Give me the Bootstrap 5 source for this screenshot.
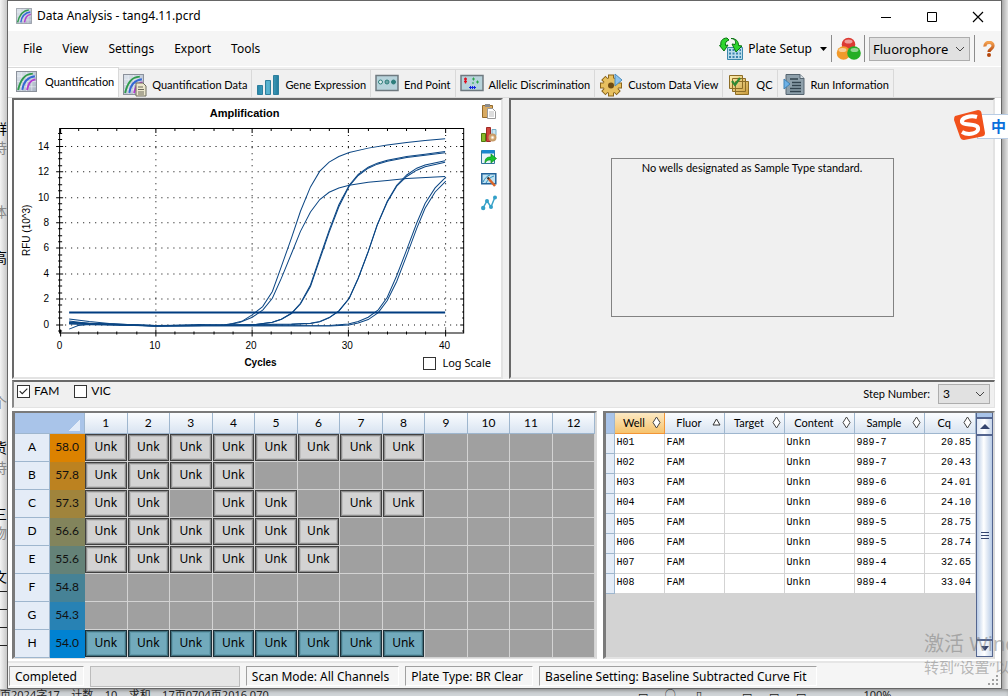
<!DOCTYPE html>
<html lang="en">
<head>
<meta charset="utf-8">
<meta name="viewport" content="width=device-width, initial-scale=1">
<title>Data Analysis - tang4.11.pcrd</title>
<link href="https://cdn.jsdelivr.net/npm/bootstrap@5.3.0/dist/css/bootstrap.min.css" rel="stylesheet">
<style>
  body { font: 12px/16px "Noto Sans", "Noto Sans CJK SC", sans-serif; color: #000; background: #ececec; overflow: hidden; }
  button, select { font: inherit; color: inherit; }
  button { border: 0; background: none; padding: 0; }
  .ui-narrow { font-family: Lato, "Liberation Sans", Arial, sans-serif; font-size: 11px; }
  .desk { grid-template-columns: 7px minmax(0, 1fr) 6px; display: grid; }
  .gutter { overflow: hidden; background: linear-gradient(90deg, #f4f4f4, #c8c8c8); }
  .gutter-r { background: linear-gradient(90deg, #a8a8a8, #e4e4e4); }
  .gutter span { position: absolute; left: -7px; width: 14px; font-size: 14px; overflow: hidden; white-space: nowrap; }
  .gutter .rule { left: 0; width: 7px; height: 1px; background: #222; }
  .app { background: #f0f0f0; border: 1px solid #666; }
  .titlebar { height: 30px; background: #fff; }
  .titlebar .name { margin-left: 5px; }
  .caption-btn { width: 46px; height: 28px; }
  .menubar { height: 35px; background: #f5f5f5; padding-left: 5px; }
  .menubar .menu { padding: 0 10px; font-size: 12px; }
  .menubar .right { padding-right: 6px; }
  .menubar .dyes { padding: 0 3px 0 4px; }
  .vsep { width: 1px; height: 27px; background: #8c8c8c; }
  .form-select { border: 1px solid #adadad; border-radius: 0; background-color: #e1e1e1; color: #000; font-size: 13px; line-height: 16px; padding: 3px 16px 3px 3px; background-size: 10px 10px; background-position: right 4px center;
    background-image: url("data:image/svg+xml,%3Csvg xmlns='http://www.w3.org/2000/svg' viewBox='0 0 10 10'%3E%3Cpath d='M1 3l4 4 4-4' fill='none' stroke='%23444'/%3E%3C/svg%3E"); }
  .by { width: 101px; }
  .tabs { border-top: 1px solid #fff; border-bottom: 1px solid #dcdcdc; height: 32px; align-items: flex-end; }
  .tabs button { height: 28px; padding: 2px 4px 0 4px; border: 1px solid #d9d9d9; border-left: 0; border-bottom: 0; display: flex; align-items: center; white-space: nowrap; }
  .tabs button svg { margin-right: 5px; flex: none; }
  .tabs button.active { height: 30px; background: #fff; padding: 0 4px 2px 8px; }
  .work { background: #fff; padding: 0 6px 0 4px; }
  .charts { display: grid; grid-template-columns: 491fr 486fr; gap: 6px; background: #f0f0f0; }
  .sunken { border: 2px solid; border-color: #696969 #e3e3e3 #e3e3e3 #696969; }
  .chart svg text { font: 10px "Liberation Sans", Arial, sans-serif; }
  .chart svg .heading { font-size: 11px; font-weight: bold; }
  .under { display: grid; grid-template-columns: 1fr auto 1fr; height: 24px; align-items: center; padding: 0 10px 3px 16px; }
  .under b { font: bold 10px/16px "Liberation Sans", sans-serif; }
  .under label { font-size: 11px; gap: 6px; }
  .tools { width: 25px; padding-top: 3px; gap: 7px; }
  .tools button { height: 16px; line-height: 0; }
  .notice { width: 283px; height: 159px; border: 1px solid #828282; margin-top: 58px; padding-top: 1px; }
  .form-check-input { width: 13px; height: 13px; border: 1px solid #333; border-radius: 0; margin: 0; background-color: #fff; }
  .form-check-input[type=checkbox] { border-radius: 0; }
  .form-check-input:checked { background-color: #fff; border-color: #333; background-image: url("data:image/svg+xml,%3Csvg xmlns='http://www.w3.org/2000/svg' viewBox='0 0 13 13'%3E%3Cpath d='M2 6l3 3 6-6' fill='none' stroke='%23222' stroke-width='1.3'/%3E%3C/svg%3E"); }
  .filters { height: 28px; border: 1px solid #e3e3e3; border-top: 2px solid #696969; border-left: 2px solid #898989; background: #f0f0f0; margin-top: 1px; }
  .filters .dye { padding-bottom: 6px; margin-left: 3px; margin-right: 12px; font-size: 12px; }
  .filters .form-select { width: 52px; font-size: 12px; padding: 1px 4px; }
  .data { display: grid; grid-template-columns: 586fr 392fr; gap: 6px; margin-top: 3px; padding-bottom: 2px; }
  .data > div { border: 2px solid; border-color: #7a7a7a #d9d9d9 #e3e3e3 #7a7a7a; border-left-width: 3px; height: 248px; }
  .plate { table-layout: fixed; width: 100%; border-collapse: separate; border-spacing: 0; text-align: center; line-height: 16px; }
  .plate th, .plate td { padding: 0; font-weight: normal; }
  .plate .ui-narrow { font-size: 12px; }
  .plate thead th { height: 21px; background: linear-gradient(#fafcff, #d9e4f1); border-right: 1px solid #9eb6ce; border-bottom: 1px solid #9eb6ce; }
  .plate thead .corner { background: linear-gradient(135deg, transparent 50%, #e2ebf8 50%) right 4px bottom 2px / 11px 11px no-repeat, #a9c4e9; }
  .plate tbody th { background: #e4ecf7; border-right: 1px solid #9eb6ce; border-bottom: 1px solid #9eb6ce; }
  .plate tbody td { height: 28px; background: #a0a0a0; border-right: 1px solid #d3d3d3; border-bottom: 1px solid #d3d3d3; }
  .plate tbody .temp { border-color: transparent; color: #111; background-clip: border-box; }
  .plate .well { height: 27px; border: 1px solid #404040; background: #d3d3d3; box-shadow: inset 0 0 0 1px #8c8c8c, inset 0 0 0 2px #bebebe; padding-top: 4px; }
  .plate .sel .well { background: #72aabc; border-color: #1c3038; box-shadow: inset 0 0 0 1px #42707e, inset 0 0 0 2px #629bac; }
  .results { background: #d3d3d3; }
  .cq { table-layout: fixed; width: 100%; border-collapse: separate; border-spacing: 0; }
  .cq th { height: 21px; font-weight: normal; padding: 0; background: linear-gradient(#fafcff, #d9e4f1); border-right: 1px solid #9eb6ce; border-bottom: 1px solid #9eb6ce; }
  .cq th .hd { display: flex; align-items: center; padding: 0 3px 0 0; }
  .cq th .hd span { flex: 1; text-align: center; }
  .cq .sorted { background: linear-gradient(#fce9c4, #f6c36d); border-color: #f29536; }
  .cq thead .edge { background: #a9c4e9; }
  .cq tbody .edge { background: #e4ecf7; border-color: #9eb6ce; }
  .cq td { height: 20px; padding: 0 0 1px 1px; background: #fff; border-right: 1px solid #d3d3d3; border-bottom: 1px solid #d3d3d3; font: 10px/14px "Liberation Mono", monospace; }
  .cq td:last-child { text-align: right; padding-right: 4px; }
  .vscroll { width: 17px; border: 1px solid #54658f; border-width: 0 1px 1px 1px; background: linear-gradient(90deg, #b8cbe6, #fff 45%, #b8cbe6); }
  .vscroll i { display: block; background: linear-gradient(90deg, #dfe8f5, #fff, #c5d4ea); border-bottom: 2px solid #54658f; height: 17px; line-height: 0; text-align: center; }
  .vscroll i.split { height: 6px; border-bottom-width: 2px; background: #a9c4e9; }
  .vscroll i.down { border: 0; border-top: 2px solid #54658f; }
  .statusbar { background: #f5f5f5; border-top: 2px solid #e6e6e6; height: 27px; padding: 3px 0 2px 1px; gap: 6px; }
  .statusbar .pane { border: 1px solid; border-color: #a0a0a0 #fff #fff #a0a0a0; padding: 2px 9px 0 5px; height: 20px; white-space: nowrap; }
  .statusbar .state { padding-right: 6px; }
  .statusbar .bar { width: 150px; height: 21px; background: #e6e6e6; border: 1px solid #bcbcbc; }
  .behind { height: 16px; line-height: 12px; font-size: 11px; white-space: pre; overflow: hidden; background: #d0d4d7; color: #222; box-shadow: inset 0 3px 4px -2px #777; }
  .ime { right: 0; top: 109px; width: 55px; height: 32px; }
  .ime .lang { left: 24px; right: 0; top: 5px; height: 25px; background: #fff; border: 1px solid #b9cde5; border-right: 0; color: #0a6fdc; font: bold 15px/22px "Noto Sans CJK SC", sans-serif; padding-left: 13px; overflow: hidden; }
  .wm { right: 0; top: 630px; width: 84px; overflow: hidden; white-space: nowrap; color: rgba(120,120,120,.5); font: 20px/28px "Noto Sans", "Noto Sans CJK SC", sans-serif; pointer-events: none; }
  .wm small { display: block; font-size: 15px; line-height: 18px; }
</style>
</head>
<body>
<svg width="0" height="0" class="position-absolute" aria-hidden="true">
  <defs>
    <linearGradient id="steel" x2="1" y2="1"><stop stop-color="#dfe6ee"/><stop offset="1" stop-color="#aab4c4"/></linearGradient>
    <linearGradient id="teal" x2="1"><stop stop-color="#2585a8"/><stop offset=".5" stop-color="#5cb6d2"/><stop offset="1" stop-color="#217b9c"/></linearGradient>
    <linearGradient id="gold" x2="1" y2="1"><stop stop-color="#fff0b0"/><stop offset="1" stop-color="#c99a3a"/></linearGradient>
    <linearGradient id="orange" y2="1" x2="0"><stop stop-color="#f3a050"/><stop offset="1" stop-color="#b5470c"/></linearGradient>
    <symbol id="curves" viewBox="0 0 20 20"><path d="M.5.5h19v19H.5z" fill="url(#steel)" stroke="#8b919b"/><path d="M5 1v18M10 1v18M15 1v18M1 5h18M1 10h18M1 15h18" stroke="#f3f6fa" stroke-width=".5"/><g fill="none" stroke-width="1.8"><path d="M2 18C4 10 7 3 16 2.500" stroke="#2f9a4c"/><path d="M6 18C7 11 10 6 18 5" stroke="#3568d4"/><path d="M10.500 18C12 12 13 9 18.500 8" stroke="#b53bd0"/></g></symbol>
  </defs>
</svg>
<div class="position-relative">
<div class="desk">
  <div class="gutter" aria-hidden="true">
    <span style="top:121px">群</span><span style="top:140px;color:#888">持</span><span style="top:204px;color:#888">体</span><span style="top:250px">高</span><span style="top:395px;color:#888">个</span><span style="top:440px">货</span><span style="top:460px;color:#888">持</span><span style="top:506px">三</span><span style="top:525px;color:#888">物</span><span style="top:569px">文</span>
    <span class="rule" style="top:591px"></span><span class="rule" style="top:609px"></span><span class="rule" style="top:627px"></span><span class="rule" style="top:645px"></span>
  </div>
  <main class="app">
    <header class="titlebar d-flex align-items-center ps-2">
      <svg width="16" height="16"><use href="#curves"/></svg><span class="name me-auto">Data Analysis - tang4.11.pcrd</span>
      <button class="caption-btn" aria-label="Minimize"><svg width="12" height="12"><path d="M1 6.500h10" stroke="#000"/></svg></button>
      <button class="caption-btn" aria-label="Maximize"><svg width="12" height="12"><path d="M1.500 1.500h9v9h-9z" fill="none" stroke="#000"/></svg></button>
      <button class="caption-btn" aria-label="Close"><svg width="12" height="12"><path d="M1 1l10 10M11 1L1 11" stroke="#000" stroke-width="1.200"/></svg></button>
    </header>
    <nav class="menubar d-flex align-items-center">
      <button class="menu">File</button><button class="menu">View</button><button class="menu">Settings</button><button class="menu">Export</button><button class="menu">Tools</button>
      <div class="right d-flex align-items-center ms-auto">
        <button class="d-flex align-items-center me-1">
          <svg width="25" height="24" class="me-1"><path d="M8.500 10.500h15v12h-15z" fill="#b9dcec" stroke="#3c88ad"/><path d="M10 13h12M10 16.500h12M10 20h12" stroke="#3a84ac" stroke-width="2" stroke-dasharray="2 1.500"/><path d="M8 1c-5 0-7 4-6 7L.500 8.500 5 14l4-6-2.500.500C6 6 7 4 10 3zM12 1.500c5 0 5 4 4 6l-3-.500 4 8 6-6-3.500-.500c0-4-2-7-7.500-7z" fill="#2ed52e" stroke="#07710f"/></svg>
          Plate Setup <svg width="7" height="4" class="ms-2"><path d="M0 0h7L3.500 4z"/></svg>
        </button>
        <span class="vsep"></span>
        <button class="dyes" aria-label="Fluorophores"><svg width="25" height="24"><circle cx="12.500" cy="7.500" r="6.800" fill="#dc3a33"/><circle cx="7.500" cy="16" r="6.800" fill="#f29a2a"/><circle cx="18" cy="16" r="6.800" fill="#26ae26"/><g fill="#fff" opacity=".5"><ellipse cx="12.500" cy="4.500" rx="4" ry="2"/><ellipse cx="6.500" cy="13" rx="4" ry="2"/><ellipse cx="18.500" cy="13" rx="4" ry="2"/></g></svg></button>
        <span class="vsep me-1"></span>
        <select class="form-select by" aria-label="Color by"><option>Fluorophore</option></select>
        <span class="vsep ms-1 me-2"></span>
        <button aria-label="Help"><svg width="12" height="16"><path d="M2 5.500C1.500 0 10.500 0 10 5c0 3-4 3-4 6" fill="none" stroke="url(#orange)" stroke-width="3.200"/><circle cx="6" cy="14" r="2" fill="#b5470c"/></svg></button>
      </div>
    </nav>
    <div class="tabs d-flex ui-narrow" role="tablist">
      <button class="active" role="tab"><svg width="24" height="22"><use href="#curves" width="21" height="21"/></svg>Quantification</button>
      <button role="tab"><svg width="24" height="24"><use href="#curves" y="1" width="21" height="21"/><path d="M13 10h7l3 3v10H13z" fill="#ece7cc" stroke="#6d6b5c"/><path d="M15 14h5M15 16.500h6M15 19h6M15 21h6" stroke="#6d6b5c"/></svg>Quantification Data</button>
      <button role="tab"><svg width="24" height="24"><g fill="url(#teal)" stroke="#2e7f9d"><path d="M1.500 12.500h5v9h-5zM9.500 7.500h5v14h-5zM17.500 2.500h5v19h-5z"/></g></svg>Gene Expression</button>
      <button role="tab"><svg width="24" height="24"><path d="M1 2.500h22v15H1z" fill="#b7d3db" stroke="#6f7a80" stroke-width="1.500"/><g stroke="#2d7d7b"><circle cx="5.500" cy="9" r="2" fill="#e0eeee"/><circle cx="12" cy="9" r="2" fill="#6fa5a5"/><circle cx="18.500" cy="9" r="2" fill="#2d7d7b"/></g></svg>End Point</button>
      <button role="tab"><svg width="24" height="24"><path d="M1 2.500h22v15H1z" fill="#b7d3db" stroke="#6f7a80" stroke-width="1.500"/><path d="M4 6h3M4 8.500h3M5.500 4.500v6" stroke="#e01020" stroke-width="1.300"/><path d="M12 6h3M13.500 4.500v3M16 9h3M17.500 7.500v3M12 10h2" stroke="#2aa84a"/><path d="M9 14.500h7M10.500 13v3M12.500 13v3M14.500 13v3" stroke="#1525e0"/></svg>Allelic Discrimination</button>
      <button role="tab"><svg width="24" height="24"><g stroke="#8a651d" stroke-width="6"><path d="M12 1.500v22M1 12.500h22M4.300 4.800l15.400 15.400M19.700 4.800L4.300 20.200"/></g><g stroke="#e9c25f" stroke-width="4"><path d="M12 2.500v20M2 12.500h20M5 5.500l14 14M19 5.500l-14 14"/></g><circle cx="12" cy="12.500" r="7.500" fill="#e7c061"/><circle cx="12" cy="12.500" r="3" fill="#6e4c13"/><path d="M16 1l7 6-7 6z" fill="#8dc3ee" stroke="#4c8dbd"/></svg>Custom Data View</button>
      <button role="tab"><svg width="24" height="24"><g fill="url(#gold)" stroke="#8d6d26"><path d="M8.500 8.500h13v13h-13zM5.500 5.500h13v13h-13zM2.500 2.500h13v13h-13z"/></g><path d="M5 8l3 4 5-7" fill="none" stroke="#2f8b35" stroke-width="2.200"/></svg>QC</button>
      <button role="tab"><svg width="24" height="24"><path d="M4 1.500h14l4 4v16H4z" fill="#8ea0ab" stroke="#566570"/><path d="M18 1.500v4h4" fill="#d6e0e6" stroke="#566570"/><path d="M8 6h8M10 9.500h9M10 12.500h9M8 15.500h11M8 18.500h11" stroke="#33444f" stroke-width="1.500"/><path d="M2 6l6 5-6 5z" fill="#6db1e6" stroke="#3f82b5"/></svg>Run Information</button>
    </div>
    <div class="work">
      <section class="charts">
        <div class="chart sunken bg-white">
          <div class="d-flex">
            <svg id="amp" class="flex-grow-1" viewBox="15 100 462 252" style="min-width:0" role="img" aria-label="Amplification chart"></svg>
            <div class="tools d-flex flex-column">
              <button aria-label="Copy"><svg width="16" height="16"><path d="M1.500 2.500h10v12h-10z" fill="#d8aa62" stroke="#936a2b"/><path d="M4 1h5v3H4z" fill="#8c8c8c"/><path d="M6.500 5.500h5l3 3v7h-8z" fill="#fff" stroke="#999"/><path d="M8 9h5M8 11h5M8 13h5" stroke="#bbb"/></svg></button>
              <button aria-label="Chart settings"><svg width="16" height="16"><path d="M.5 7.500h4v8h-4z" fill="#8ab82a" stroke="#4e7a10"/><path d="M5.500 1.500h4v14h-4z" fill="#d0453c" stroke="#a02a25"/><path d="M11 3.500h4v6h-4z" fill="#cbe5f2" stroke="#79aec5"/><circle cx="11.500" cy="11.500" r="3" fill="#e9c79b" stroke="#c79c68" stroke-width="2"/><circle cx="11.500" cy="11.500" r="1" fill="#fff"/></svg></button>
              <button aria-label="Export"><svg width="16" height="16"><path d="M.5 1.500h13v13H.5z" fill="#e9f2fa" stroke="#31769b"/><path d="M1 1h12.500v3.500H1z" fill="#1a86cf"/><path d="M4 14c0-5 2-6 6-6V5l5.500 4.500L10 14v-3c-3 0-4 0-6 3z" fill="#18c32d" stroke="#0a8c1c" stroke-width=".7"/></svg></button>
              <button aria-label="Edit chart"><svg width="16" height="16"><path d="M.8 1.800h14v10H.8z" fill="#bfe2f2" stroke="#23639a" stroke-width="1.500"/><path d="M2 10c2-4 4-6 7-7M5 11c2-4 5-6 8-7" fill="none" stroke="#2d8fbd"/><path d="M7 6l7 8" stroke="#d9652a" stroke-width="2.500"/><path d="M6.500 5.500l1.500 1.500" stroke="#333" stroke-width="2"/></svg></button>
              <button aria-label="Trace"><svg width="16" height="16"><path d="M2 13L6 6l4 6 4-10" fill="none" stroke="#3aa3c8" stroke-width="1.500"/><g fill="#33a0c8"><circle cx="2.200" cy="13" r="2.200"/><circle cx="6" cy="6" r="2"/><circle cx="10" cy="12" r="2"/><circle cx="14" cy="2.500" r="2"/></g></svg></button>
            </div>
          </div>
          <div class="under"><span></span><b>Cycles</b><label class="d-flex align-items-center justify-content-end"><input type="checkbox" class="form-check-input">Log Scale</label></div>
        </div>
        <div class="sunken d-flex justify-content-center align-items-start"><div class="notice text-center ui-narrow">No wells designated as Sample Type standard.</div></div>
      </section>
      <section class="filters d-flex align-items-center ui-narrow">
        <label class="dye d-flex align-items-center gap-1"><input type="checkbox" class="form-check-input" checked>FAM</label>
        <label class="dye d-flex align-items-center gap-1"><input type="checkbox" class="form-check-input">VIC</label>
        <label class="ms-auto me-2" for="step">Step Number:</label>
        <select id="step" class="form-select me-1"><option>3</option></select>
      </section>
      <section class="data">
        <div style="background:#d3d3d3">
          <table class="plate"><colgroup><col style="width:35px"><col style="width:35px"></colgroup>
            <thead id="cols" class="ui-narrow"></thead><tbody id="plate"></tbody></table>
        </div>
        <div class="results d-flex">
          <div class="flex-grow-1">
            <table class="cq">
              <colgroup><col style="width:9px"><col style="width:50px"><col style="width:60px"><col style="width:60px"><col style="width:70px"><col style="width:70px"><col></colgroup>
              <thead class="ui-narrow"><tr id="cqhead"><th class="edge"></th></tr></thead><tbody id="cq"></tbody>
            </table>
          </div>
          <div class="vscroll d-flex flex-column justify-content-between" aria-hidden="true">
            <div><i class="split"></i><i><svg width="10" height="14"><path d="M5 5l5 5H0z" fill="#34446e"/></svg></i></div>
            <svg width="15" height="12"><path d="M4 1.500h8M4 4.500h8M4 7.500h8" stroke="#34446e"/></svg>
            <i class="down"><svg width="10" height="14"><path d="M5 10l4-5H1z" fill="#34446e"/></svg></i>
          </div>
        </div>
      </section>
    </div>
    <footer class="statusbar d-flex align-items-start position-relative">
      <div class="pane state">Completed</div><div class="bar"></div><div class="pane">Scan Mode: All Channels</div><div class="pane">Plate Type: BR Clear</div><div class="pane">Baseline Setting: Baseline Subtracted Curve Fit</div>
      <svg class="ms-auto align-self-end" width="14" height="12"><path d="M9 1h2v2H9zM5 5h2v2H5zM9 5h2v2H9zM1 9h2v2H1zM5 9h2v2H5zM9 9h2v2H9z" fill="#a0a0a0"/></svg>
    </footer>
  </main>
  <div class="gutter gutter-r" aria-hidden="true"></div>
</div>
<div class="behind" aria-hidden="true">页2024字17    计数    10    求和    17页0704页2016 070                                                                                                                                 ▭      ○       ▯              ▭      ▭      ▭                    100%</div>
<div class="ime position-absolute">
  <div class="lang position-absolute">中</div>
  <svg class="position-absolute" width="34" height="32"><path d="M2 7L25 1q3 0 3.500 3L32 24q0 3-3 3.500L11 31q-3 0-4-3L1 11q0-3 1-4z" fill="#f1511b"/><path d="M24 8C17 6 8 9 9 13s15 1 16 6-9 8-16 4" fill="none" stroke="#fff" stroke-width="4"/></svg>
</div>
<div class="wm position-absolute">激活 Windows<small>转到“设置”以激活</small></div>
</div>
<script src="https://cdn.jsdelivr.net/npm/bootstrap@5.3.0/dist/js/bootstrap.bundle.min.js"></script>
<script>
  // Amplification chart: 9.625 units per cycle, 12.7 units per 1000 RFU
  const X = c => 60.5 + c * 9.625, Y = v => 324.5 - v * 12.7;
  let s = '<text class="heading" x="245" y="117" text-anchor="middle">Amplification</text>' +
    '<text transform="translate(31 230) rotate(-90)" text-anchor="middle">RFU (10^3)</text>', t = '', g = '';
  for (let v = -0.5; v <= 15; v += 0.5) {
    const y = Math.round(Y(v)) - .5, big = v % 2 === 0;
    t += `M${big ? 57 : 59} ${y}H${big ? 64 : 63}M${big ? 460 : 462} ${y}H464`;
    if (big) { g += `M66 ${y}H460`; s += `<text x="50" y="${y + 3}" text-anchor="end">${v}</text>`; }
  }
  for (let c = 0; c <= 40; c += 2) {
    const x = Math.round(X(c)) - .5 + (c ? 0 : 1), big = c % 10 === 0;
    t += `M${x} ${big ? 329 : 331}V${big ? 336 : 334}M${x} 128V${big ? 133 : 131}`;
    if (big) { if (c) g += `M${x} 135V328`; s += `<text x="${x - 1}" y="348" text-anchor="middle">${c}</text>`; }
  }
  s += `<path d="M60.5 128.500H463.500V332.500H60.500z${t}" fill="none" stroke="#000"/><path d="${g}" stroke="#000" stroke-dasharray="1 5" fill="none"/>`;
  const traces = [
    '70,318.5 90,321 110,323 156,325.5 200,324 224,324.3 233,323 243,320.300 252.500,314.300 263,306 272.700,291 281.700,266 291.700,237.700 300.700,211 310.700,186.700 320,171 329.300,162 339,156.300 349.300,152.300 368.300,148 387.300,145 406.700,142.300 425,140.300 445,138.700',
    '70,328.5 79,325 90,324 156,325 224,325 240,322 252.700,316.700 263.300,309.300 272.700,297.700 281.700,277.700 291.700,253.300 300.700,231 310.700,211.700 320,199.300 329.300,192 339,187.700 349.300,185 368.300,182 387.300,180.300 406.700,178.300 445,176.300',
    '70,320.5 90,323 156,325.5 252.700,324.300 272.700,321.700 281.700,318.700 291.700,312.700 300.700,302.700 310.700,284.500 320,257 329.300,230 339,204.500 349.300,185 358.300,174.300 368.300,167 377.300,163 387.300,160 406.700,156.300 425,154 445,151.300',
    '70,321.5 90,323 156,325.5 252.700,324.300 272.700,321.700 281.700,318.700 291.700,313 300.700,303.500 310.700,286 320,259 329.300,232 339,206.500 349.300,186 358.300,175.300 368.300,168 377.300,164 387.300,161 406.700,157.300 425,155 445,152.500',
    '70,322.5 156,325 291.700,323.500 310.700,322.700 320,321 329.300,317 339,310.300 349.300,297.700 358.300,277.700 368.300,251 377.300,224.300 387.300,201 396.700,185 406.700,174.800 416.700,168 425,164.800 445,160.500',
    '70,323 156,325.500 291.700,324 310.700,323 320,321.300 329.300,317.300 339,310.500 349.300,298 358.300,278 368.300,251.500 377.300,224.800 387.300,201.800 396.700,186 406.700,176.300 416.700,170 425,166.500 445,162',
    '70,323.500 156,325.500 330,325 348.300,323.300 358.300,321 368.300,316.700 378.300,309.300 387.300,296.700 396.700,275.300 406.700,249.300 416.700,222.700 425,203.300 435,187.700 445.700,177',
    '70,322 156,325 330,325.300 349,324.500 358.300,322.500 368.300,319 378.300,312 387.300,300 396.700,281 406.700,255 416.700,228 425,208 435,191.700 445.700,181'];
  s += '<g fill="none" stroke="#0b4684" stroke-width="1">' + traces.map(p => `<polyline points="${p}"/>`).join('') + '</g><path d="M70 312H445" stroke="#003c80" stroke-width="2"/>';
  document.getElementById('amp').innerHTML = s;

  // 96-well plate
  document.getElementById('cols').innerHTML = '<tr><th class="corner" colspan="2"></th>' + Array.from({length: 12}, (_, i) => `<th>${i + 1}</th>`).join('') + '</tr>';
  const rows = [['A','58.0','#dc8200','11111111'],['B','57.8','#bc8220','1111'],['C','57.3','#a0843c','11011011'],['D','56.6','#82845c','111111'],
    ['E','55.6','#648278','111111'],['F','54.8','#468296',''],['G','54.3','#2882b4',''],['H','54.0','#0082d2','11111111']];
  document.getElementById('plate').innerHTML = rows.map(([n, temp, color, w]) =>
    `<tr class="${n === 'H' ? 'sel' : ''}"><th class="ui-narrow">${n}</th><td class="temp ui-narrow" style="background-color:${color}">${temp}</td>` +
    Array.from({length: 12}, (_, i) => `<td>${w[i] === '1' ? '<div class="well">Unk</div>' : ''}</td>`).join('') + '</tr>').join('');

  // Results list
  const diamond = '<path d="M4.500 1l3.500 5.500L4.500 12 1 6.500z" fill="#fff" stroke="#444"/>', tri = '<path d="M4.500 3l3.500 6H1z" fill="#fff" stroke="#333"/>';
  document.getElementById('cqhead').innerHTML += ['Well','Fluor','Target','Content','Sample','Cq'].map((h, i) =>
    `<th class="${i ? '' : 'sorted'}"><div class="hd"><span>${h}</span><svg width="9" height="13">${i === 1 ? tri : diamond}</svg></div></th>`).join('');
  const cq = [['989-7','20.85'],['989-7','20.43'],['989-6','24.01'],['989-6','24.10'],['989-5','28.75'],['989-5','28.74'],['989-4','32.65'],['989-4','33.04']];
  document.getElementById('cq').innerHTML = cq.map(([smp, v], i) => `<tr><td class="edge"></td><td>H0${i + 1}</td><td>FAM</td><td></td><td>Unkn</td><td>${smp}</td><td>${v}</td></tr>`).join('');
</script>
</body>
</html>
